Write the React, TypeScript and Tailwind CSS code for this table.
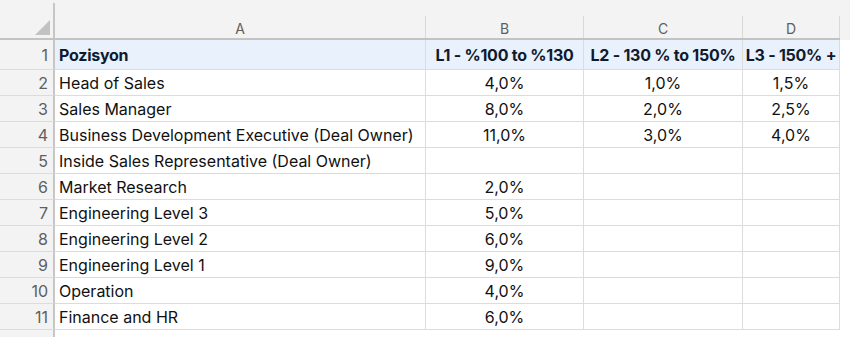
import React from "react";

type Row = { n: number; a: string; b?: string; c?: string; d?: string };

const rows: Row[] = [
  { n: 2, a: "Head of Sales", b: "4,0%", c: "1,0%", d: "1,5%" },
  { n: 3, a: "Sales Manager", b: "8,0%", c: "2,0%", d: "2,5%" },
  { n: 4, a: "Business Development Executive (Deal Owner)", b: "11,0%", c: "3,0%", d: "4,0%" },
  { n: 5, a: "Inside Sales Representative (Deal Owner)" },
  { n: 6, a: "Market Research", b: "2,0%" },
  { n: 7, a: "Engineering Level 3", b: "5,0%" },
  { n: 8, a: "Engineering Level 2", b: "6,0%" },
  { n: 9, a: "Engineering Level 1", b: "9,0%" },
  { n: 10, a: "Operation", b: "4,0%" },
  { n: 11, a: "Finance and HR", b: "6,0%" },
];

const letters = [
  { l: "A", w: "w-[371px]" },
  { l: "B", w: "w-[158px]" },
  { l: "C", w: "w-[159px]" },
  { l: "D", w: "w-[97px]" },
];

function RowNum({ n, h }: { n: number; h: string }) {
  return (
    <div className={`${h} w-[55px] shrink-0 bg-[#f3f3f3] border-r-2 border-r-[#c6c6c6] border-b border-b-[#dcdcdc] flex items-center justify-end pr-[5px] text-[#5e5e5e] text-[16px] leading-[20px]`}>
      {n}
    </div>
  );
}

export default function App() {
  return (
    <div className="w-[850px] h-[337px] bg-white overflow-hidden flex flex-col font-['Inter',sans-serif] text-[#111111]">
      {/* column header */}
      <div className="h-[40px] flex shrink-0 bg-[#f3f3f3]">
        <div className="w-[55px] shrink-0 flex flex-col pt-[3px] border-b-2 border-b-[#c3c3c3]">
          <div className="flex-1 border-r-2 border-r-[#c6c6c6] flex items-end justify-end pr-[3px] pb-[3px]">
            <svg width="15" height="15" viewBox="0 0 15 15">
              <polygon points="15,0 15,15 0,15" fill="#c2c2c2" />
            </svg>
          </div>
        </div>
        {letters.map((c) => (
          <div key={c.l} className={`${c.w} shrink-0 flex flex-col pt-[16px] border-b-2 border-b-[#c3c3c3]`}>
            <div className="flex-1 border-r border-r-[#d9d9d9] flex items-end justify-center pb-[2px] text-[14px] leading-[14px] text-[#5e5e5e]">
              {c.l}
            </div>
          </div>
        ))}
        <div className="flex-1" />
      </div>

      {/* row 1 */}
      <div className="h-[30px] flex shrink-0">
        <RowNum n={1} h="h-[30px]" />
        <div className="w-[371px] shrink-0 bg-[#e8f1fc] border-r border-b border-[#dcdcdc] flex items-center pl-[4px] font-bold text-[16px] leading-[20px] tracking-[-0.25px] text-[#0f1a2e]">
          Pozisyon
        </div>
        <div className="w-[158px] shrink-0 bg-[#e8f1fc] border-r border-b border-[#dcdcdc] flex items-center justify-center font-bold text-[16px] leading-[20px] tracking-[-0.25px] text-[#0f1a2e] whitespace-nowrap">
          L1 - %100 to %130
        </div>
        <div className="w-[159px] shrink-0 bg-[#e8f1fc] border-r border-b border-[#dcdcdc] flex items-center justify-center font-bold text-[16px] leading-[20px] tracking-[-0.25px] text-[#0f1a2e] whitespace-nowrap">
          L2 - 130 % to 150%
        </div>
        <div className="w-[97px] shrink-0 bg-[#e8f1fc] border-r border-b border-[#dcdcdc] flex items-center justify-center font-bold text-[16px] leading-[20px] tracking-[-0.25px] text-[#0f1a2e] whitespace-nowrap">
          L3 - 150% +
        </div>
      </div>

      {rows.map((r) => (
        <div key={r.n} className="h-[26px] flex shrink-0">
          <RowNum n={r.n} h="h-[26px]" />
          <div className="w-[371px] shrink-0 border-r border-b border-[#dcdcdc] flex items-center pl-[4px] text-[16px] leading-[20px] whitespace-nowrap">
            {r.a}
          </div>
          <div className="w-[158px] shrink-0 border-r border-b border-[#dcdcdc] flex items-center justify-center text-[16px] leading-[20px]">
            {r.b ?? ""}
          </div>
          <div className="w-[159px] shrink-0 border-r border-b border-[#dcdcdc] flex items-center justify-center text-[16px] leading-[20px]">
            {r.c ?? ""}
          </div>
          <div className="w-[97px] shrink-0 border-r border-b border-[#dcdcdc] flex items-center justify-center text-[16px] leading-[20px]">
            {r.d ?? ""}
          </div>
        </div>
      ))}

      <div className="flex-1 flex">
        <div className="w-[55px] shrink-0 bg-[#f3f3f3] border-r-2 border-r-[#c6c6c6]" />
      </div>
    </div>
  );
}
